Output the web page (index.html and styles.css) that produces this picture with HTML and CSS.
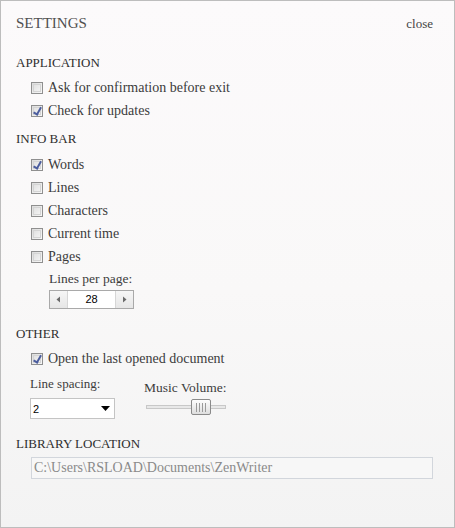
FILE: index.html
```html
<!DOCTYPE html>
<html>
<head>
<meta charset="utf-8">
<link rel="stylesheet" href="styles.css">
</head>
<body>
<div class="window">
  <header class="titlebar">
    <h1 class="title">SETTINGS</h1>
    <span class="close">close</span>
  </header>

  <section class="section compact">
    <h2 class="heading">APPLICATION</h2>
    <div class="options">
      <label class="option"><span class="box"></span>Ask for confirmation before exit</label>
      <label class="option"><span class="box checked"></span>Check for updates</label>
    </div>
  </section>

  <section class="section">
    <h2 class="heading">INFO BAR</h2>
    <div class="options">
      <label class="option"><span class="box checked"></span>Words</label>
      <label class="option"><span class="box"></span>Lines</label>
      <label class="option"><span class="box"></span>Characters</label>
      <label class="option"><span class="box"></span>Current time</label>
      <label class="option"><span class="box"></span>Pages</label>
    </div>
    <div class="lines-per-page">
      <div class="field-label wide">Lines per page:</div>
      <div class="spinner">
        <span class="spin-btn"><svg width="5" height="7" viewBox="0 0 5 7"><path d="M4 0.5 L0.5 3.5 L4 6.5 Z" fill="#6a6a6a"/></svg></span>
        <span class="spin-value">28</span>
        <span class="spin-btn"><svg width="5" height="7" viewBox="0 0 5 7"><path d="M1 0.5 L4.5 3.5 L1 6.5 Z" fill="#6a6a6a"/></svg></span>
      </div>
    </div>
  </section>

  <section class="section">
    <h2 class="heading">OTHER</h2>
    <div class="options">
      <label class="option"><span class="box checked"></span>Open the last opened document</label>
    </div>
    <div class="other-row">
      <div class="col-spacing">
        <div class="field-label">Line spacing:</div>
        <div class="select"><span class="select-value">2</span><svg width="9" height="5" viewBox="0 0 9 5"><path d="M0 0 H9 L4.5 5 Z" fill="#000"/></svg></div>
      </div>
      <div class="col-volume">
        <div class="field-label wide">Music Volume:</div>
        <div class="slider">
          <div class="track"></div>
          <div class="thumb"><span></span><span></span><span></span><span></span></div>
        </div>
      </div>
    </div>
  </section>

  <section class="section">
    <h2 class="heading">LIBRARY LOCATION</h2>
    <div class="path">C:\Users\RSLOAD\Documents\ZenWriter</div>
  </section>
</div>
</body>
</html>
```

FILE: styles.css
```css
* { box-sizing: border-box; }
html, body { margin: 0; padding: 0; }
body {
  width: 455px;
  height: 528px;
  font-family: "Liberation Serif", "DejaVu Serif", serif;
  color: #3a3a3a;
}
.window {
  width: 455px;
  height: 528px;
  border: 1px solid #bdbdbd;
  background: linear-gradient(180deg, #fcfafb 0%, #f9f8f8 55%, #f3f3f3 100%);
  padding: 0 21px 0 15px;
}
.titlebar {
  display: flex;
  justify-content: space-between;
  align-items: baseline;
  height: 52px;
  padding-top: 12px;
}
.title {
  margin: 0;
  font-weight: normal;
  font-size: 15px;
  line-height: 20px;
  color: #505050;
}
.close {
  font-size: 13px;
  line-height: 20px;
  color: #444;
}
.section { margin-bottom: 15px; }
.section.compact { margin-bottom: 7px; }
.heading {
  margin: 0;
  font-weight: normal;
  font-size: 13px;
  color: #2e2e2e;
  height: 20px;
  line-height: 20px;
}
.options {
  display: flex;
  flex-direction: column;
  padding-left: 15px;
  padding-top: 3px;
}
.section + .section .options { padding-top: 4px; }
.section:nth-of-type(3) .options { padding-top: 3px; }
.option {
  display: flex;
  align-items: center;
  height: 23px;
  font-size: 14px;
  color: #3c3c3c;
}
.box {
  width: 12px;
  height: 12px;
  border: 1px solid #8f8f8f;
  background: linear-gradient(135deg, #dcdcdc, #f8f8f8);
  margin-right: 5px;
  position: relative;
  flex: none;
}
.box::before {
  content: "";
  position: absolute;
  inset: 1px;
  border: 1px solid #d4d4d4;
}
.box.checked::after {
  content: "";
  position: absolute;
  left: 3px;
  top: 0px;
  width: 3px;
  height: 7px;
  border-right: 2px solid #4b5d9e;
  border-bottom: 2px solid #4b5d9e;
  transform: rotate(30deg);
}
.lines-per-page {
  padding-left: 33px;
  padding-top: 2px;
}
.field-label {
  font-size: 13px;
  color: #3c3c3c;
  height: 18px;
  line-height: 18px;
}
.field-label.wide { font-size: 13.5px; }
.spinner {
  display: flex;
  width: 85px;
  height: 19px;
  border: 1px solid #a9a9a9;
  background: #fff;
  margin-top: 2px;
}
.spin-btn {
  width: 17px;
  display: flex;
  align-items: center;
  justify-content: center;
  background: linear-gradient(180deg, #f6f6f6, #e6e6e6);
}
.spin-value {
  flex: 1;
  text-align: center;
  font-family: "Liberation Sans", Arial, sans-serif;
  font-size: 11px;
  line-height: 17px;
  color: #000;
  border-left: 1px solid #d6d6d6;
  border-right: 1px solid #d6d6d6;
}
.other-row {
  display: flex;
  padding-left: 14px;
  padding-top: 5px;
}
.col-spacing { width: 114px; }
.col-volume { padding-top: 4px; }
.select {
  width: 85px;
  height: 21px;
  margin-top: 5px;
  border: 1px solid #c4c4c4;
  background: #fff;
  display: flex;
  align-items: center;
  justify-content: space-between;
  padding: 0 4px 0 2px;
  font-family: "Liberation Sans", Arial, sans-serif;
  font-size: 11px;
  color: #000;
}
.slider {
  position: relative;
  width: 80px;
  height: 18px;
  margin-top: 1px;
  margin-left: 2px;
}
.track {
  position: absolute;
  left: 0;
  right: 0;
  top: 7px;
  height: 4px;
  border: 1px solid #c8c8c8;
  background: #e8e8e8;
}
.thumb {
  position: absolute;
  left: 45px;
  top: 1px;
  width: 20px;
  height: 16px;
  border: 1px solid #8a8a8a;
  border-radius: 2px;
  background: linear-gradient(180deg, #fdfdfd, #dedede);
  display: flex;
  justify-content: center;
  align-items: center;
  gap: 2px;
}
.thumb span {
  width: 1px;
  height: 9px;
  background: #9a9a9a;
}
.path {
  margin-left: 15px;
  margin-top: 3px;
  height: 22px;
  border: 1px solid #d2d6dc;
  background: #f7f7f7;
  font-size: 14px;
  color: #8a8a8a;
  line-height: 20px;
  padding-left: 2px;
}
```
